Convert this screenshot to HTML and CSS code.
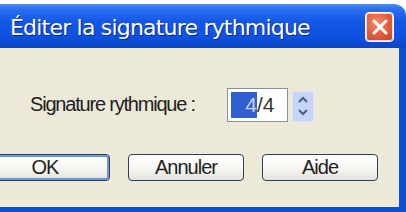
FILE: index.html
```html
<!DOCTYPE html>
<html lang="fr">
<head>
<meta charset="utf-8">
<link rel="stylesheet" href="styles.css">
</head>
<body>
<div class="window">
  <div class="titlebar">
    <span class="title">Éditer la signature rythmique</span>
    <button class="close" aria-label="Fermer">
      <svg width="18" height="18" viewBox="0 0 18 18"><path d="M3 3 L15 15 M15 3 L3 15" stroke="#fff" stroke-width="3" stroke-linecap="round"/></svg>
    </button>
  </div>
  <div class="content">
    <div class="field-row">
      <span class="label">Signature rythmique :</span>
      <div class="edit"><span class="sel">4</span>/4</div>
      <div class="spin">
        <svg width="12" height="8" viewBox="0 0 12 8"><path d="M2 6 L6 2 L10 6" fill="none" stroke="#4d6185" stroke-width="2"/></svg>
        <svg width="12" height="8" viewBox="0 0 12 8"><path d="M2 2 L6 6 L10 2" fill="none" stroke="#4d6185" stroke-width="2"/></svg>
      </div>
    </div>
    <div class="buttons">
      <button class="btn default">OK</button>
      <button class="btn">Annuler</button>
      <button class="btn">Aide</button>
    </div>
  </div>
</div>
</body>
</html>
```
FILE: styles.css
```css
html, body {
  margin: 0;
  padding: 0;
  background: #ffffff;
}
.window {
  width: 406px;
  height: 212px;
  padding-top: 4px;
  box-sizing: border-box;
  display: flex;
  flex-direction: column;
  font-family: "Liberation Sans", Arial, sans-serif;
}
.titlebar {
  height: 44px;
  flex: none;
  display: flex;
  align-items: center;
  justify-content: space-between;
  padding: 0 12px 0 10px;
  background: linear-gradient(180deg, #4a90f5 0%, #2a6ff0 12%, #1457e6 40%, #0f50df 75%, #0a45cc 100%);
  border-top-right-radius: 12px;
}
.title {
  color: #ffffff;
  font-family: "DejaVu Sans", sans-serif;
  font-size: 22px;
  letter-spacing: -0.8px;
  text-shadow: 1px 1px 0 #0a2a80;
  margin-top: 2px;
}
.close {
  width: 29px;
  height: 30px;
  padding: 0;
  margin: 2px 0 0 0;
  border: 1px solid #ffffff;
  border-radius: 4px;
  background: radial-gradient(circle at 40% 35%, #f29070 0%, #e3603f 45%, #c8401f 100%);
  display: flex;
  align-items: center;
  justify-content: center;
  box-shadow: 0 0 0 1px #d7dff5 inset;
}
.content {
  flex: 1;
  background: #ece9d8;
  border-right: 7px solid #0a4fd6;
  border-bottom: 5px solid #0a4fd6;
  display: flex;
  flex-direction: column;
}
.field-row {
  display: flex;
  align-items: center;
  margin-top: 39px;
  padding-left: 30px;
  height: 35px;
}
.label {
  font-size: 20px;
  letter-spacing: -1.2px;
  color: #222;
  width: 197px;
}
.edit {
  width: 61px;
  height: 34px;
  box-sizing: border-box;
  border: 1px solid #8a8f9a;
  background: #ffffff;
  display: flex;
  align-items: center;
  padding-left: 3px;
  font-size: 21px;
  color: #333;
}
.sel {
  background: #2f5fd0;
  color: #c9d6f5;
  display: inline-block;
  width: 26px;
  height: 26px;
  line-height: 26px;
  text-align: right;
}
.spin {
  width: 22px;
  height: 31px;
  margin-left: 4px;
  margin-top: 3px;
  background: #c5d4f7;
  border: 1px solid #dbe4fa;
  border-radius: 2px;
  display: flex;
  flex-direction: column;
  align-items: center;
  justify-content: space-around;
  padding: 3px 0;
  box-sizing: border-box;
}
.buttons {
  display: flex;
  margin-top: 32px;
  margin-left: -20px;
  gap: 18px;
}
.btn {
  width: 116px;
  height: 27px;
  font-family: "Liberation Sans", Arial, sans-serif;
  font-size: 20px;
  letter-spacing: -1px;
  color: #222;
  background: linear-gradient(180deg, #ffffff 0%, #f4f4f0 60%, #e3e2da 100%);
  border: 1px solid #2d3f5a;
  border-radius: 4px;
  padding: 0;
  box-sizing: border-box;
}
.btn.default {
  width: 130px;
  box-shadow: inset 0 0 0 2px #6e94e4;
}
```
